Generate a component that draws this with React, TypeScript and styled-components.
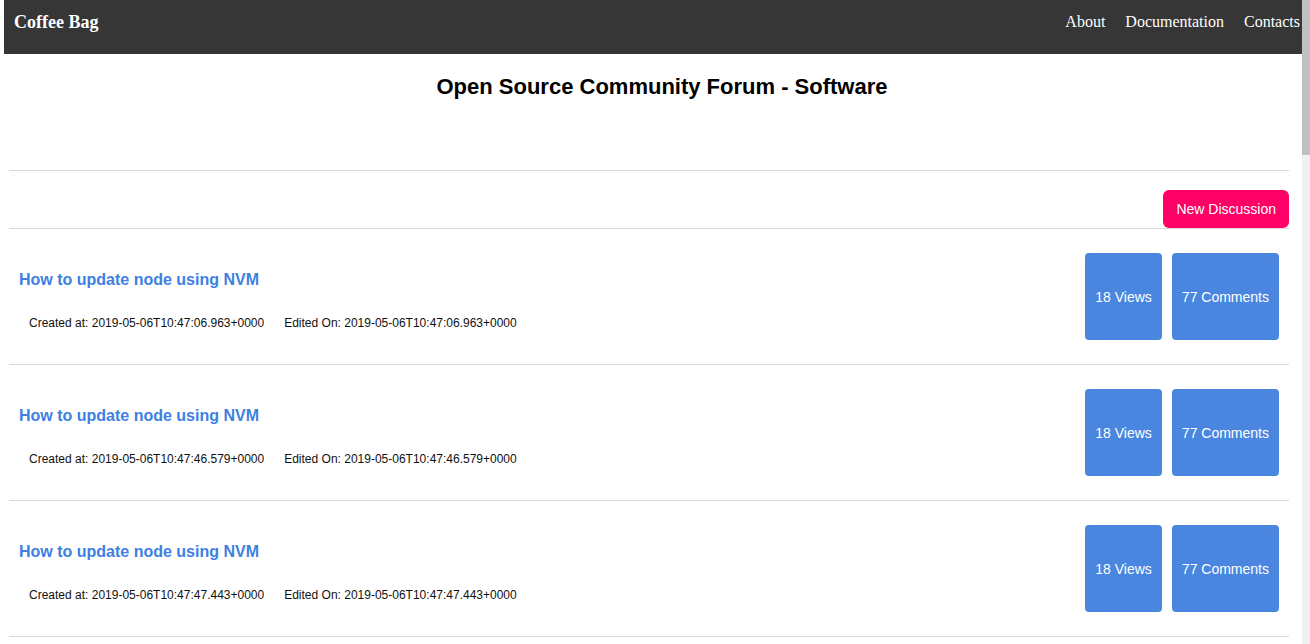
import React from "react";
import styled, { createGlobalStyle } from "styled-components";

const GlobalStyle = createGlobalStyle`
  html, body { margin: 0; padding: 0; background: #ffffff; }
  body { font-family: "Liberation Sans", Arial, sans-serif; }
`;

const Page = styled.div`
  margin-right: 8px;
`;

const ScrollTrack = styled.div`
  position: fixed;
  top: 0;
  right: 0;
  width: 8px;
  height: 100vh;
  background: #f1f1f1;
`;

const ScrollThumb = styled.div`
  width: 8px;
  height: 155px;
  background: #c1c1c1;
`;

const NavBar = styled.nav`
  margin-left: 4px;
  height: 54px;
  background: #363636;
  display: flex;
  align-items: flex-start;
  justify-content: space-between;
  padding: 11px 2px 0 10px;
  box-sizing: border-box;
  font-family: "Liberation Serif", "Times New Roman", serif;
  color: #ffffff;
`;

const Brand = styled.a`
  font-size: 18px;
  font-weight: bold;
  line-height: 22px;
  color: #ffffff;
  text-decoration: none;
`;

const NavLinks = styled.div`
  display: flex;
  gap: 20px;
  padding-top: 1px;
`;

const NavLink = styled.a`
  font-size: 16px;
  line-height: 20px;
  color: #ffffff;
  text-decoration: none;
`;

const Main = styled.main`
  margin: 0 13px 0 9px;
`;

const Header = styled.header`
  height: 117px;
  padding-top: 20px;
  box-sizing: border-box;
  border-bottom: 1px solid #d8d8d8;
`;

const PageTitle = styled.h1`
  margin: 0;
  padding-left: 26px;
  font-size: 22px;
  line-height: 26px;
  font-weight: bold;
  text-align: center;
  color: #000000;
`;

const Toolbar = styled.div`
  display: flex;
  justify-content: flex-end;
  padding-top: 19px;
  border-bottom: 1px solid #d8d8d8;
`;

const NewButton = styled.button`
  height: 38px;
  padding: 0 13px;
  border: none;
  border-radius: 6px;
  background: #ff0066;
  color: #ffffff;
  font-family: "Liberation Sans", Arial, sans-serif;
  font-size: 14px;
  cursor: pointer;
`;

const Row = styled.div`
  display: flex;
  justify-content: space-between;
  align-items: flex-start;
  padding: 24px 10px 24px 10px;
  border-bottom: 1px solid #d8d8d8;
`;

const Info = styled.div`
  display: flex;
  flex-direction: column;
`;

const TopicTitle = styled.a`
  margin-top: 17px;
  font-size: 16px;
  line-height: 20px;
  font-weight: bold;
  color: #3d7fe2;
  text-decoration: none;
`;

const Meta = styled.div`
  margin-top: 25px;
  margin-left: 10px;
  display: flex;
  gap: 20px;
  font-size: 12px;
  line-height: 16px;
  color: #111111;
`;

const Stats = styled.div`
  display: flex;
  gap: 10px;
`;

const StatBox = styled.div`
  height: 87px;
  padding: 0 10px;
  display: flex;
  align-items: center;
  justify-content: center;
  border-radius: 4px;
  background: #4a86e0;
  color: #ffffff;
  font-size: 14px;
`;

const stamps = [
  "2019-05-06T10:47:06.963+0000",
  "2019-05-06T10:47:46.579+0000",
  "2019-05-06T10:47:47.443+0000",
];

export default function App() {
  return (
    <>
      <GlobalStyle />
      <Page>
        <NavBar>
          <Brand href="#">Coffee Bag</Brand>
          <NavLinks>
            <NavLink href="#">About</NavLink>
            <NavLink href="#">Documentation</NavLink>
            <NavLink href="#">Contacts</NavLink>
          </NavLinks>
        </NavBar>
        <Main>
          <Header>
            <PageTitle>Open Source Community Forum - Software</PageTitle>
          </Header>
          <Toolbar>
            <NewButton>New Discussion</NewButton>
          </Toolbar>
          {stamps.map((s) => (
            <Row key={s}>
              <Info>
                <TopicTitle href="#">How to update node using NVM</TopicTitle>
                <Meta>
                  <span>Created at: {s}</span>
                  <span>Edited On: {s}</span>
                </Meta>
              </Info>
              <Stats>
                <StatBox>18 Views</StatBox>
                <StatBox>77 Comments</StatBox>
              </Stats>
            </Row>
          ))}
        </Main>
      </Page>
      <ScrollTrack>
        <ScrollThumb />
      </ScrollTrack>
    </>
  );
}
